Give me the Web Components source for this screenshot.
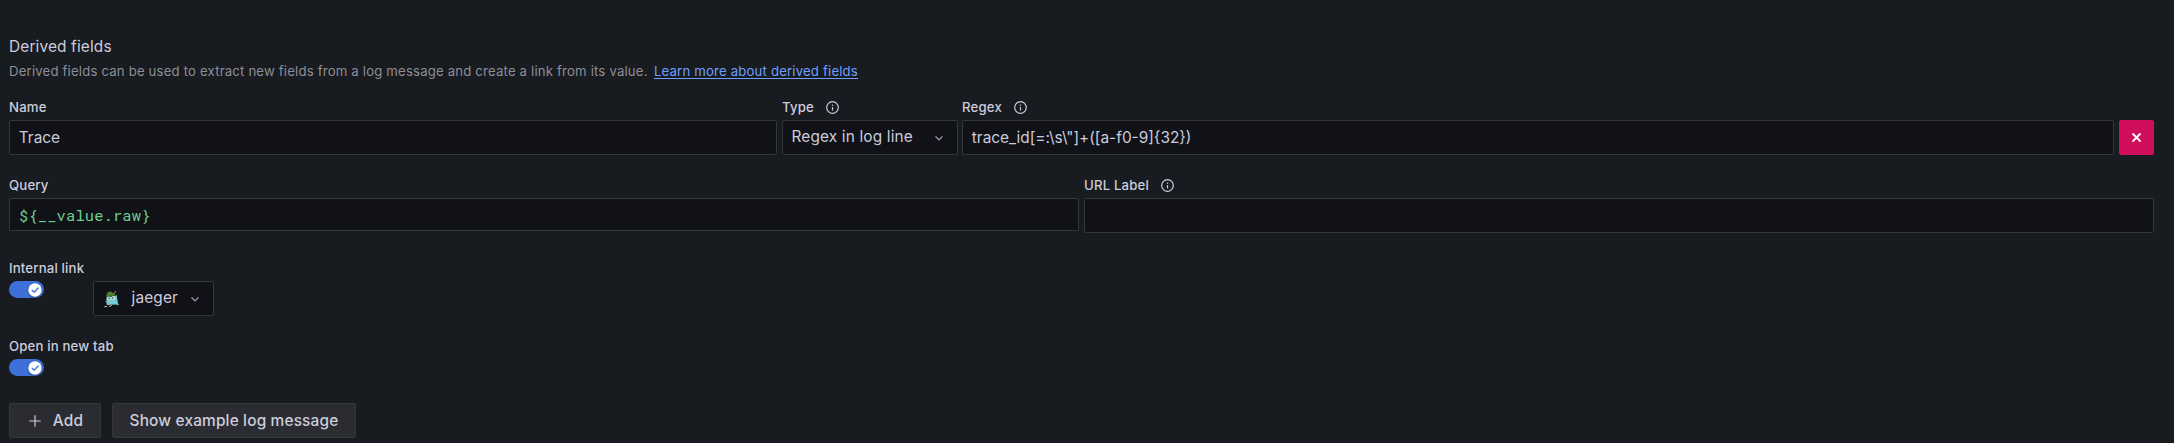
<!DOCTYPE html>
<html lang="en">
<head>
<meta charset="utf-8">
<title>Derived fields</title>
<style>
html,body{margin:0;height:100%;background:#181b1f}
body{overflow:hidden;color:#ccccdc;font:400 15.4px/24px Inter,"Open Sans",sans-serif;letter-spacing:.1px}
</style>
</head>
<body>
<derived-fields></derived-fields>
<script>
const define = (name, html) => {
  const t = document.createElement('template');
  t.innerHTML = html;
  customElements.define(name, class extends HTMLElement {
    constructor() {
      super();
      this.attachShadow({ mode: 'open' }).append(t.content.cloneNode(true));
    }
  });
};

define('info-icon', `<style>:host{display:block;width:13px;height:13px}svg{display:block}</style>
<svg width="13" height="13" viewBox="0 0 13 13" fill="none" stroke="currentColor" stroke-width="1.2"><circle cx="6.5" cy="6.5" r="5.8"/><path d="M6.5 6.1v3.3"/><path d="M6.5 3.6v1.3" stroke-width="1.3"/></svg>`);

define('chevron-icon', `<style>:host{display:block;width:8px;height:5px;color:#8f909c}svg{display:block}</style>
<svg width="8" height="5" viewBox="0 0 8 5" fill="none" stroke="currentColor" stroke-width="1.35" stroke-linecap="round" stroke-linejoin="round"><path d="M.9.8 4 3.9 7.1.8"/></svg>`);

define('gopher-logo', `<style>:host{display:block;width:18px;height:18px}svg{display:block}</style>
<svg width="18" height="18" viewBox="0 0 18 18">
<path d="M3.8 5.8 13.6 5l1.5 9.6-11.4.2z" fill="#6fd0dc"/>
<path d="M3.8 8.2 2.3 11.4l1.5 2z" fill="#4aa6b4"/>
<path d="M3.2 5.6C4 2.4 6.2.9 8.5 1.9l3.1 2.4 1.6 1.6c-3 .8-6.6 1-9.4 1z" fill="#4f7f2b"/>
<path d="M2.9 5.7c3 .9 7 .9 10.5-.5" stroke="#34551f" stroke-width="1" fill="none"/>
<path d="M11.2 4.2 12.5 1" stroke="#a68b58" stroke-width=".9"/>
<circle cx="5.7" cy="8.3" r="1.8" fill="#d5e6e5"/><circle cx="10.2" cy="8" r="1.9" fill="#d5e6e5"/>
<circle cx="6" cy="8.3" r=".8" fill="#26363a"/><circle cx="9.8" cy="8.1" r=".8" fill="#26363a"/>
<path d="M7 10h2v1.4H7z" fill="#c8b394"/>
<path d="M4 14.3h3M13.6 13.9l2.1.6" stroke="#c5a982" stroke-width="1.2"/>
<path d="M1.2 16.9l3-.7M6 16.6l2.8-1.3" stroke="#bfc2c5" stroke-width="1"/>
</svg>`);

define('field-box', `<style>
:host{display:flex;flex-direction:column;min-width:0}
.label{display:flex;align-items:center;height:16px;margin-bottom:5px;font-size:13.2px;line-height:16px;font-weight:500;letter-spacing:.16px;white-space:nowrap}
::slotted(info-icon){margin-left:12px}
</style><div class="label"><slot name="label"></slot><slot name="info"></slot></div><slot></slot>`);

define('text-box', `<style>
:host{display:flex;align-items:center;box-sizing:border-box;height:35px;padding:0 8.8px;border:1px solid #35363c;border-radius:2px;background:#111217;letter-spacing:0;white-space:pre}
</style><slot></slot>`);

define('code-box', `<style>
:host{display:flex;align-items:center;box-sizing:border-box;height:33px;padding:1px 9px 0;border:1px solid #35363c;border-radius:2px;background:#111217;color:#6ccf8e;font:400 15.4px/22px "Roboto Mono","DejaVu Sans Mono",monospace;letter-spacing:.16px}
</style><slot></slot>`);

define('select-box', `<style>
:host{display:flex;align-items:center;box-sizing:border-box;height:35px;padding:0 14px 0 8.5px;border:1px solid #35363c;border-radius:2px;background:#111217;letter-spacing:.15px;white-space:nowrap}
.value{display:flex;flex:1;align-items:center;padding-bottom:1px}
chevron-icon{margin-top:2px}
</style><slot name="icon"></slot><span class="value"><slot></slot></span><chevron-icon></chevron-icon>`);

define('toggle-switch', `<style>
:host{display:flex;align-items:center;justify-content:flex-end;box-sizing:border-box;width:35px;height:17px;padding-right:2px;border-radius:9px;background:#3d71d9}
svg{display:block;filter:drop-shadow(0 1px 1px #0006)}
</style><svg width="14" height="14" viewBox="0 0 14 14"><circle cx="7" cy="7" r="6.7" fill="#fff"/><path d="M4.1 7.2 6.2 9.2 10.1 5" fill="none" stroke="#3d71d9" stroke-width="1.25" stroke-linecap="round" stroke-linejoin="round"/></svg>`);

define('action-button', `<style>
:host{display:flex;align-items:center;justify-content:center;box-sizing:border-box;height:35px;border:1px solid #36373d;border-radius:2px;background:#2b2c31;font-weight:500;letter-spacing:.17px;white-space:nowrap}
:host([danger]){background:#d10e5c;border-color:#d10e5c;color:#fff}
</style><slot></slot>`);

define('derived-fields', `<style>
:host{display:block;box-sizing:border-box;height:443px;padding:35px 20px 0 9px}
h1{margin:0;font:inherit;height:24px;letter-spacing:.15px}
p{margin:1px 0 0;font-size:13.2px;line-height:22px;height:22px;color:#8d8e99;letter-spacing:.167px;white-space:nowrap}
a{color:#6e9fff;margin-left:2.4px;text-decoration:underline;text-underline-offset:2px}
.one{display:grid;grid-template-columns:768px 176px 1fr 35px;gap:5px;align-items:end;margin-top:17px}
.one field-box:nth-child(3){margin-left:-1px}
.two{display:grid;grid-template-columns:1fr 1fr;gap:5px;align-items:start;margin-top:22px}
.three{display:flex;align-items:flex-end;height:56px;margin-top:27px}
.three field-box{width:84px;height:56px}
.three select-box{width:121px}
.three gopher-logo{margin-right:11px}
.four{margin-top:22px}
.buttons{display:flex;gap:11px;margin-top:27px}
.add{width:92px;padding-left:2px}.add svg{margin-right:12px}
.example{width:244px}
svg{display:block}
</style>
<h1>Derived fields</h1>
<p>Derived fields can be used to extract new fields from a log message and create a link from its value. <a>Learn more about derived fields</a></p>
<div class="one">
<field-box><span slot="label">Name</span><text-box>Trace</text-box></field-box>
<field-box><span slot="label">Type</span><info-icon slot="info"></info-icon><select-box>Regex in log line</select-box></field-box>
<field-box><span slot="label">Regex</span><info-icon slot="info"></info-icon><text-box>trace_id[=:\\s\\"]+([a-f0-9]{32})</text-box></field-box>
<action-button danger><svg width="11" height="11" viewBox="0 0 11 11" fill="none" stroke="currentColor" stroke-width="1.8" stroke-linecap="round"><path d="m2 2 7 7M9 2 2 9"/></svg></action-button>
</div>
<div class="two">
<field-box><span slot="label">Query</span><code-box>\${__value.raw}</code-box></field-box>
<field-box><span slot="label">URL Label</span><info-icon slot="info"></info-icon><text-box></text-box></field-box>
</div>
<div class="three">
<field-box><span slot="label">Internal link</span><toggle-switch></toggle-switch></field-box>
<select-box><gopher-logo slot="icon"></gopher-logo>jaeger</select-box>
</div>
<field-box class="four"><span slot="label">Open in new tab</span><toggle-switch></toggle-switch></field-box>
<div class="buttons">
<action-button class="add"><svg width="12" height="12" viewBox="0 0 12 12" stroke="currentColor" stroke-width="1.2" stroke-linecap="round"><path d="M6 .7v10.6M.7 6h10.6"/></svg>Add</action-button>
<action-button class="example">Show example log message</action-button>
</div>`);
</script>
</body>
</html>
